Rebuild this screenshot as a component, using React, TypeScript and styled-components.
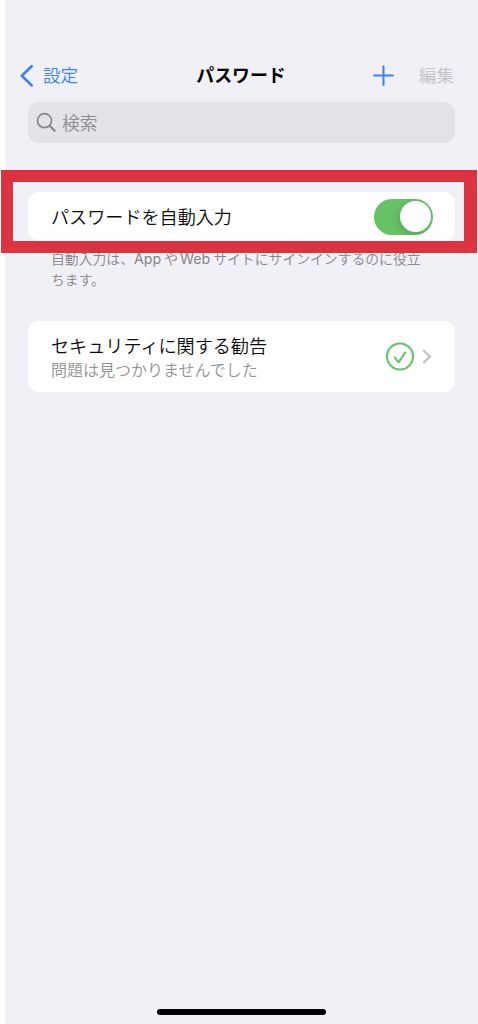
import React, { useState } from "react";
import styled, { createGlobalStyle } from "styled-components";

const GlobalStyle = createGlobalStyle`
  * { box-sizing: border-box; }
  body { margin: 0; background: #ffffff; }
  button { border: 0; padding: 0; background: none; font: inherit; color: inherit; }
`;

const Viewport = styled.div`
  position: relative;
  height: 1024px;
  overflow: hidden;
`;

const Screen = styled.div`
  position: relative;
  display: flex;
  flex-direction: column;
  height: 1024px;
  margin-left: 5px;
  padding: 54px 23px 0;
  background: #f1f0f6;
  overflow: hidden;
  font-family: Inter, "Noto Sans CJK JP", sans-serif;
  font-weight: 350;
  white-space: nowrap;
`;

const NavBar = styled.header`
  display: grid;
  grid-template-columns: 1fr auto 1fr;
  align-items: center;
  height: 44px;
  margin: 0 1px 4px -8px;
  font-size: 17.6px;
  line-height: 44px;
`;

const BackButton = styled.button`
  display: flex;
  align-items: center;
  gap: 9px;
  color: #3b82f7;
`;

const Title = styled.h1`
  margin: 0 -4px 0 4px;
  font-size: 17.9px;
  font-weight: 700;
  line-height: 44px;
  color: #000;
`;

const Actions = styled.div`
  display: flex;
  align-items: center;
  justify-content: flex-end;
  gap: 24px;
`;

const EditButton = styled.button`
  color: #c2c2c6;
`;

const SearchField = styled.div`
  display: flex;
  align-items: center;
  gap: 5px;
  height: 41px;
  padding-left: 8px;
  border-radius: 11px;
  background: #e3e2e7;
  color: #8c8c91;
  font-size: 17.8px;
  line-height: 41px;
`;

const SearchText = styled.span`
  padding-top: 2px;
`;

const Card = styled.section<{ $height: number; $top: number }>`
  display: flex;
  align-items: center;
  justify-content: space-between;
  height: ${(p) => p.$height}px;
  margin-top: ${(p) => p.$top}px;
  padding: 0 22px 0 23px;
  border-radius: 11px;
  background: #fff;
`;

const Label = styled.div`
  font-size: 18.1px;
  line-height: 24px;
  color: #0c0c0d;
`;

const SubLabel = styled.div`
  font-size: 16px;
  line-height: 25px;
  color: #929296;
`;

const Advisory = styled.div`
  padding-top: 3px;
`;

const Footnote = styled.p`
  margin: 8px 0 0 23px;
  font-size: 13.83px;
  line-height: 21px;
  color: #86868b;
`;

const FootnoteLine = styled.span`
  display: block;
`;

const Latin = styled.span<{ $before?: number }>`
  margin: 0 3px 0 ${(p) => p.$before ?? 0}px;
  font-size: 14.2px;
  font-weight: 400;
  line-height: 1;
`;

const Toggle = styled.button<{ $on: boolean }>`
  display: flex;
  justify-content: ${(p) => (p.$on ? "flex-end" : "flex-start")};
  align-items: center;
  width: 59px;
  height: 36px;
  padding: 0 2.5px;
  border-radius: 18px;
  background: ${(p) => (p.$on ? "#65c366" : "#e3e2e7")};
`;

const Knob = styled.span`
  width: 31px;
  height: 31px;
  border-radius: 50%;
  background: #fff;
  box-shadow: -2px 2px 6px rgba(0, 0, 0, 0.15);
`;

const Status = styled.div`
  display: flex;
  align-items: center;
  gap: 7px;
  padding-right: 1px;
`;

const Highlight = styled.div`
  position: absolute;
  left: 1px;
  top: 170px;
  width: 476px;
  height: 83px;
  border: 12px solid #dc3340;
  border-right-width: 13px;
  pointer-events: none;
`;

const HomeIndicator = styled.div`
  position: absolute;
  left: 152px;
  bottom: 9px;
  width: 169px;
  height: 6px;
  border-radius: 3px;
  background: #000;
`;

export default function App() {
  const [autoFill, setAutoFill] = useState(true);
  return (
    <Viewport>
      <GlobalStyle />
      <Screen>
        <NavBar>
          <BackButton>
            <svg width="14" height="24" viewBox="0 0 14 24" fill="none" stroke="#3b82f7" strokeWidth="2.6" strokeLinecap="round" strokeLinejoin="round">
              <path d="M11.7 2.2 1.8 11.8l9.9 9.6" />
            </svg>
            設定
          </BackButton>
          <Title>パスワード</Title>
          <Actions>
            <svg width="22" height="22" viewBox="0 0 22 22" fill="none" stroke="#3b82f7" strokeWidth="2" strokeLinecap="round">
              <path d="M10.5 1.3v18.6M1.2 10.5h18.6" />
            </svg>
            <EditButton>編集</EditButton>
          </Actions>
        </NavBar>
        <SearchField>
          <svg width="21" height="21" viewBox="0 0 21 21" fill="none" stroke="#86868b" strokeLinecap="round">
            <circle cx="8.5" cy="8.7" r="7" strokeWidth="1.7" />
            <path d="m13.8 14 4.8 4.8" strokeWidth="2.3" />
          </svg>
          <SearchText>検索</SearchText>
        </SearchField>
        <Card $height={49} $top={49}>
          <Label>パスワードを自動入力</Label>
          <Toggle $on={autoFill} onClick={() => setAutoFill(!autoFill)}>
            <Knob />
          </Toggle>
        </Card>
        <Footnote>
          <FootnoteLine>
            自動入力は、<Latin>App</Latin>や<Latin $before={2}>Web</Latin>サイトにサインインするのに役立
          </FootnoteLine>
          <FootnoteLine>ちます。</FootnoteLine>
        </Footnote>
        <Card $height={71} $top={30}>
          <Advisory>
            <Label>セキュリティに関する勧告</Label>
            <SubLabel>問題は見つかりませんでした</SubLabel>
          </Advisory>
          <Status>
            <svg width="30" height="30" viewBox="0 0 30 30" fill="none" stroke="#65c366" strokeWidth="2.1" strokeLinecap="round" strokeLinejoin="round">
              <circle cx="15" cy="14.5" r="13" />
              <path d="m9.8 15.7 3.8 4.6 6.6-10" />
            </svg>
            <svg width="10" height="16" viewBox="0 0 10 16" fill="none" stroke="#c4c4c7" strokeWidth="2.2" strokeLinecap="round" strokeLinejoin="round">
              <path d="m1.8 1.8 6.2 5.8-6.2 5.8" />
            </svg>
          </Status>
        </Card>
        <HomeIndicator />
      </Screen>
      <Highlight />
    </Viewport>
  );
}
